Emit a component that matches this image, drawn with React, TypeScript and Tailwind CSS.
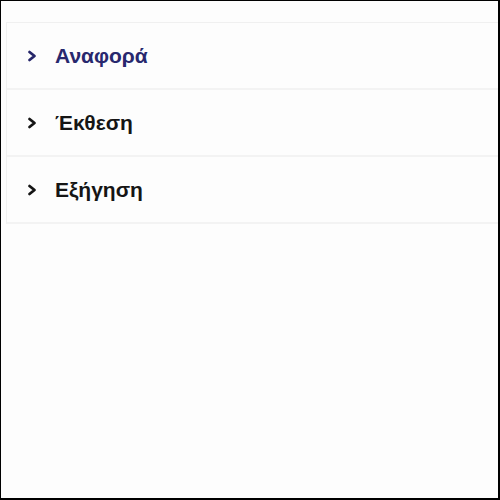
const items = [
  { label: 'Αναφορά', active: true },
  { label: 'Έκθεση', active: false },
  { label: 'Εξήγηση', active: false },
]

const Chevron = ({ color }: { color: string }) => (
  <svg width="11" height="12" viewBox="0 0 11 12" fill="none">
    <path d="M2.5 2 L7.5 6 L2.5 10" stroke={color} strokeWidth="2.8" strokeLinecap="round" strokeLinejoin="round" />
  </svg>
)

export default function App() {
  return (
    <div className="w-[500px] h-[500px] bg-[#fdfdfd] border border-black border-r-2 border-b-2 pt-[21px] pl-[5px]">
      <div className="border-t border-l border-[#f0f0f0] font-['Liberation_Sans',Arial,sans-serif]">
        {items.map(item => (
          <div
            key={item.label}
            className="h-[67px] border-b-2 border-[#f3f3f3] flex items-center pl-[20px] gap-[17px]"
          >
            <Chevron color={item.active ? '#26266a' : '#151515'} />
            <span className={`text-[21px] font-bold ${item.active ? 'text-[#28286e]' : 'text-[#151515]'}`}>
              {item.label}
            </span>
          </div>
        ))}
      </div>
    </div>
  )
}
